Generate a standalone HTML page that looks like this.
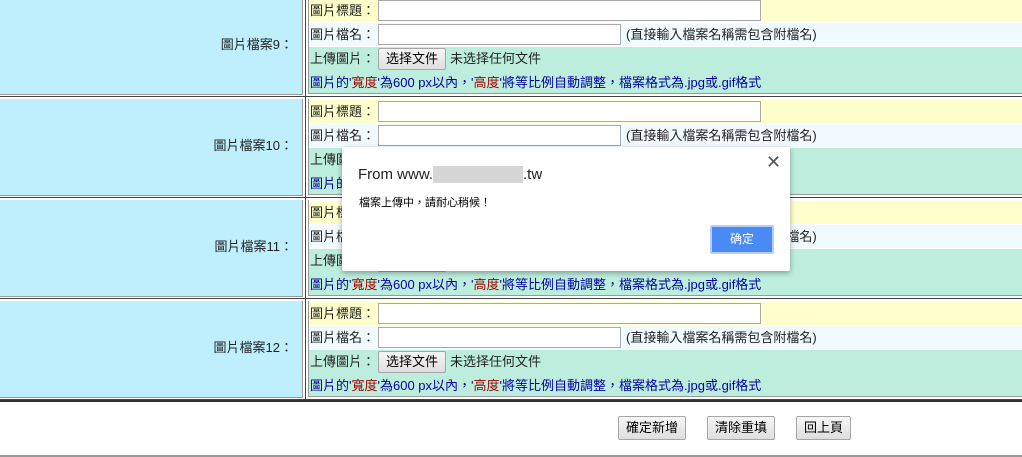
<!DOCTYPE html><html><head><meta charset="utf-8"><style>
body{margin:0;width:1022px;height:457px;overflow:hidden;background:#fff;font:13px "Liberation Sans","Noto Sans CJK TC",sans-serif;color:#222;position:relative}
.a{position:absolute}
.l{background:#bfeffc}
.inp{position:absolute;background:#fff;border:1px solid #a9a9a9;box-sizing:border-box}
.btn{position:absolute;background:linear-gradient(#f6f6f6,#dedede);border:1px solid #a6a6a6;border-radius:2px;box-sizing:border-box;text-align:center;color:#000}
.t{position:absolute;white-space:nowrap;line-height:16px}
.blue{color:#0000a0}.red{color:#a00000}
</style></head><body>
<div id="g"></div>
<div class="a" style="left:0;top:400px;width:1022px;height:2px;background:#333"></div>
<div class="a" style="left:0;top:455px;width:1022px;height:2px;background:#999"></div>
<div class="btn" style="left:618px;top:416px;width:68px;height:24px;line-height:22px">確定新增</div>
<div class="btn" style="left:707px;top:416px;width:68px;height:24px;line-height:22px">清除重填</div>
<div class="btn" style="left:796px;top:416px;width:55px;height:24px;line-height:22px">回上頁</div>
<script>
var h='';
[9,10,11,12].forEach(function(n,i){var t=-1+i*101;
h+='<div class="a l" style="left:0;top:'+(t-1)+'px;width:302px;height:96px;border-right:1px solid #999;border-bottom:1px solid #999"></div>';
h+='<div class="a" style="left:305px;top:'+(t-2)+'px;width:1px;height:101px;background:#444"></div>';
h+='<div class="a" style="left:0;top:'+(t+97)+'px;width:1022px;height:1px;background:#444"></div>';
h+='<div class="t" style="right:729px;top:'+(t+38)+'px">圖片檔案'+n+'：</div>';
h+='<div class="a" style="left:308px;top:'+(t-1)+'px;width:714px;height:96px;border-bottom:1px solid #999;border-left:1px solid #999;box-sizing:border-box"></div>';
h+='<div class="a" style="left:309px;top:'+t+'px;width:713px;height:23px;background:#ffffcc"></div>';
h+='<div class="a" style="left:309px;top:'+(t+24)+'px;width:713px;height:23px;background:#f0faff"></div>';
h+='<div class="a" style="left:309px;top:'+(t+48)+'px;width:713px;height:46px;background:#bdeedd"></div>';
h+='<div class="t" style="left:310px;top:'+(t+4)+'px">圖片標題：</div><div class="inp" style="left:378px;top:'+(t+1)+'px;width:383px;height:21px"></div>';
h+='<div class="t" style="left:310px;top:'+(t+28)+'px">圖片檔名：</div><div class="inp" style="left:378px;top:'+(t+25)+'px;width:243px;height:21px"></div><div class="t" style="left:626px;top:'+(t+28)+'px">(直接輸入檔案名稱需包含附檔名)</div>';
h+='<div class="t" style="left:310px;top:'+(t+52)+'px">上傳圖片：</div><div class="btn" style="left:378px;top:'+(t+49)+'px;width:68px;height:22px;line-height:20px">选择文件</div><div class="t" style="left:450px;top:'+(t+52)+'px">未选择任何文件</div>';
h+='<div class="t blue" style="left:310px;top:'+(t+76)+'px">圖片的\'<span class="red">寬度</span>\'為600 px以內，\'<span class="red">高度</span>\'將等比例自動調整，檔案格式為.jpg或.gif格式</div>';
});
document.getElementById('g').outerHTML=h;
</script>
<div class="a" style="left:342px;top:147px;width:448px;height:124px;background:#fff;border-radius:2px;box-shadow:0 2px 6px rgba(0,0,0,.35)">
<div class="t" style="left:16px;top:20px;font-size:15px;color:#222">From www.<span style="background:#d6d6d6;color:#d6d6d6">xxxxxxxxxxxx</span>.tw</div>
<div class="t" style="left:424px;top:7px;font-size:18px;color:#555">✕</div>
<div class="t" style="left:17px;top:48px;font-size:11px;color:#000">檔案上傳中，請耐心稍候！</div>
<div class="a" style="left:368px;top:78px;width:64px;height:29px;background:#4a8af4;border:2px solid #b4cffa;box-sizing:border-box;border-radius:2px;color:#fff;font-size:12px;text-align:center;line-height:25px">确定</div>
</div>
</body></html>
